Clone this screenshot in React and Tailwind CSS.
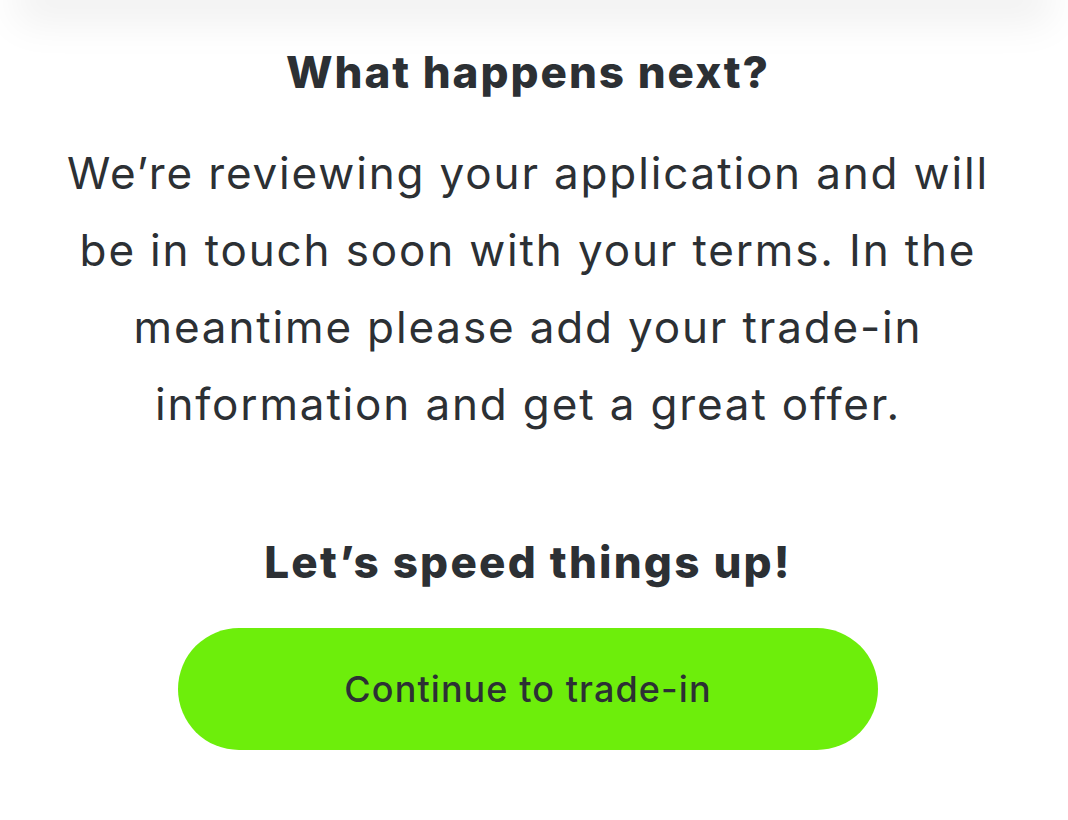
export default function App() {
    return (
        <div className="w-[1068px] h-[820px] bg-white overflow-hidden font-['Inter','Liberation_Sans',sans-serif] text-[#2c3034] [font-variant-ligatures:none]">
            <div className="mx-[40px] h-[1px] -mt-[1px] bg-white shadow-[0_0_40px_24px_rgba(0,0,0,0.06)]"></div>
            <main className="flex flex-col items-center pt-[44px] pr-[12px]">
                <h1 className="text-[44px] leading-[56px] font-extrabold tracking-[0.045em]">What happens next?</h1>
                <p className="mt-[35px] text-[44px] leading-[77px] text-center font-normal tracking-[0.042em]">
                    We’re reviewing your application and will<br />
                    be in touch soon with your terms. In the<br />
                    meantime please add your trade-in<br />
                    information and get a great offer.
                </p>
                <h2 className="mt-[91px] text-[44px] leading-[56px] font-extrabold tracking-[0.05em]">Let’s speed things up!</h2>
                <button className="mt-[38px] w-[700px] h-[122px] rounded-full bg-[#6dee0b] text-[36px] font-medium tracking-[0.03em] text-[#2c3034]">
                    Continue to trade-in
                </button>
            </main>
        </div>
    );
}
